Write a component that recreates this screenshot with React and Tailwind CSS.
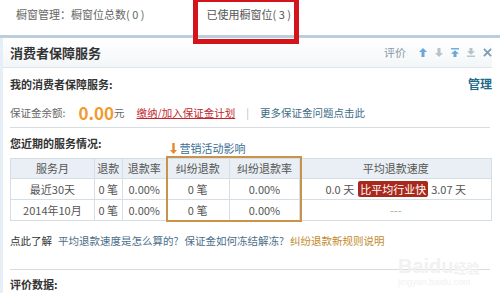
import React from 'react';

const font = { fontFamily: '"Noto Sans CJK SC", "Noto Sans", sans-serif' };

function Up({ c }) {
  return (
    <svg width="8" height="9" viewBox="0 0 9 10"><path d="M4.5 0 L9 4.5 H6.2 V10 H2.8 V4.5 H0 Z" fill={c} /></svg>
  );
}
function Down({ c }) {
  return (
    <svg width="8" height="9" viewBox="0 0 9 10"><path d="M2.8 0 H6.2 V5.5 H9 L4.5 10 L0 5.5 H2.8 Z" fill={c} /></svg>
  );
}
function Top({ c }) {
  return (
    <svg width="8" height="9" viewBox="0 0 9 10"><rect x="0" y="0" width="9" height="1.6" fill={c} /><path d="M4.5 2.5 L9 6.5 H6.2 V10 H2.8 V6.5 H0 Z" fill={c} /></svg>
  );
}
function Bottom({ c }) {
  return (
    <svg width="8" height="9" viewBox="0 0 9 10"><path d="M2.8 0 H6.2 V3.5 H9 L4.5 7.5 L0 3.5 H2.8 Z" fill={c} /><rect x="0" y="8.4" width="9" height="1.6" fill={c} /></svg>
  );
}
function Close() {
  return (
    <svg width="9" height="9" viewBox="0 0 10 10"><path d="M1 1 L9 9 M9 1 L1 9" stroke="#7f9bb3" strokeWidth="2" /></svg>
  );
}

const th = 'border border-[#d6dee5] font-normal text-center';
const td = 'border border-[#d6dee5] text-center';

export default function App() {
  return (
    <div className="relative w-[500px] h-[303px] overflow-hidden bg-white text-[10.5px] text-[#555]" style={font}>
      {/* top bar */}
      <div className="h-[35px] flex pt-[6px] text-[11px] text-[#666]">
        <span className="ml-[16px]">橱窗管理：橱窗位总数( 0 )</span>
        <span className="ml-[62px] text-[#555]">已使用橱窗位( 3 )</span>
      </div>
      <div className="absolute left-[193px] top-[-3px] w-[106px] h-[47px] border-[5px] border-[#d3141c]" />
      <div className="h-[3px] bg-[#bccddb]" />

      <div className="border-l-[3px] border-[#e6eff5] pr-[8px]">
        {/* header */}
        <div className="h-[30px] flex items-center border-b border-[#dfe5ea] bg-gradient-to-b from-white to-[#f3f6f8] pl-[7px] pr-0">
          <span className="text-[13px] font-bold text-[#333]">消费者保障服务</span>
          <span className="ml-auto text-[11px] text-[#8a9aa8] mr-[13px]">评价</span>
          <div className="flex items-center gap-[8px]">
            <Up c="#6aa8d8" />
            <Down c="#b8c2ca" />
            <Top c="#6aa8d8" />
            <Bottom c="#b8c2ca" />
            <Close />
          </div>
        </div>

        <div className="pl-[7px]">
          <div className="h-[30px] flex items-center pt-[2px]">
            <span className="text-[11px] font-bold text-[#333]">我的消费者保障服务:</span>
            <span className="ml-auto text-[12px] font-bold text-[#1d6a8a]">管理</span>
          </div>
          <div className="h-[29px] flex items-center">
            <span className="text-[#666]">保证金余额:</span>
            <span className="ml-[13px] text-[17px] font-bold text-[#f39a2e] leading-none">0.00</span>
            <span className="text-[#666]">元</span>
            <span className="ml-[12px] text-[#c0272d] underline">缴纳/加入保证金计划</span>
            <span className="ml-[11px] text-[#bbb]">|</span>
            <span className="ml-[11px] text-[#3d6c86]">更多保证金问题点击此</span>
          </div>
          <div className="border-t border-[#d6dde2] mr-[2px]" />

          <div className="h-[30px] flex items-start pt-[7px]">
            <span className="text-[11px] font-bold text-[#333]">您近期的服务情况:</span>
            <span className="ml-[68px] mt-[5px] flex items-center gap-[3px] text-[11px] text-[#3a6e95]">
              <svg width="7" height="11" viewBox="0 0 7 11"><path d="M2.3 0 H4.7 V7 H7 L3.5 11 L0 7 H2.3 Z" fill="#e5892e" /></svg>
              营销活动影响
            </span>
          </div>

          <div className="relative">
            <table className="border-collapse text-[11px] text-[#555]">
              <thead>
                <tr className="h-[20px] bg-[#e9eff4]">
                  <th className={`${th} w-[84px]`}>服务月</th>
                  <th className={`${th} w-[28px]`}>退款</th>
                  <th className={`${th} w-[44px]`}>退款率</th>
                  <th className={`${th} w-[63px]`}>纠纷退款</th>
                  <th className={`${th} w-[71px]`}>纠纷退款率</th>
                  <th className={`${th} w-[192px]`}>平均退款速度</th>
                </tr>
              </thead>
              <tbody>
                <tr className="h-[21px]">
                  <td className={td}>最近30天</td>
                  <td className={td}>0 笔</td>
                  <td className={td}>0.00%</td>
                  <td className={td}>0 笔</td>
                  <td className={td}>0.00%</td>
                  <td className={td}>
                    <span>0.0 天</span>
                    <span className="ml-[4px] px-[2px] bg-[#a8281c] text-white rounded-[2px]">比平均行业快</span>
                    <span className="ml-[3px]">3.07 天</span>
                  </td>
                </tr>
                <tr className="h-[21px]">
                  <td className={td}>2014年10月</td>
                  <td className={td}>0 笔</td>
                  <td className={td}>0.00%</td>
                  <td className={td}>0 笔</td>
                  <td className={td}>0.00%</td>
                  <td className={`${td} text-[#aaa]`}>---</td>
                </tr>
              </tbody>
            </table>
            <div className="absolute left-[156px] top-[-2px] w-[136px] h-[66px] border-2 border-[#c9934c] pointer-events-none" />
          </div>

          <div className="h-[48px] flex items-start pt-[12px] gap-[6px]">
            <span className="text-[#333]">点此了解</span>
            <span className="text-[#4a6e88]">平均退款速度是怎么算的?</span>
            <span className="text-[#4a6e88]">保证金如何冻结解冻?</span>
            <span className="text-[#c28a2c]">纠纷退款新规则说明</span>
          </div>
          <div className="border-t border-[#d6dde2] mr-[2px]" />
          <div className="pt-[6px] text-[11px] font-bold text-[#333]">评价数据:</div>
        </div>
      </div>

      <div className="absolute left-[398px] top-[256px] text-[#f1f1f1] leading-none pointer-events-none">
        <div className="text-[20px] font-bold" style={{ fontFamily: '"Liberation Sans", sans-serif' }}>Baidu<span className="text-[13px]" style={font}>经验</span></div>
        <div className="text-[9px] mt-[2px]" style={{ fontFamily: '"Liberation Sans", sans-serif' }}>jingyan.baidu.com</div>
      </div>
    </div>
  );
}
